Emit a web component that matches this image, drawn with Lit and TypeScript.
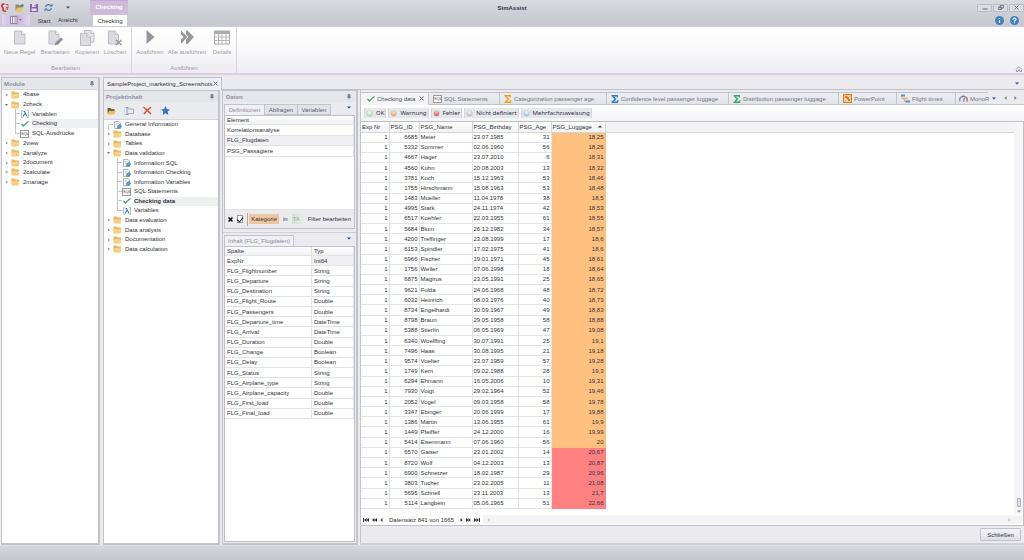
import { LitElement, html, svg, css, nothing } from "lit";
import { customElement, property } from "lit/decorators.js";
import { classMap } from "lit/directives/class-map.js";

const svgIcon = (w: number, h: number, vb: string, body: unknown) =>
  html`<svg width=${w} height=${h} viewBox=${vb} aria-hidden="true">${body}</svg>`;

const icons: Record<string, () => unknown> = {
  logo: () => svgIcon(8, 9, "0 0 16 18", svg`<path d="M7 2C3 1 1 4 2 7s3 2 2 5 2 5 6 4" fill="none" stroke="#d8232e" stroke-width="3"/><path d="M9 3h5v4M10 9h5M13 9v5M9 12h2" stroke="#e0525a" stroke-width="2" fill="none"/>`),
  openProject: () => svgIcon(9, 9, "0 0 18 18", svg`<path d="M1 3h6l2 2h5v10H1z" fill="#8b8878"/><path d="M4 9h13l-3 8H1z" fill="#f3c05c"/><path d="M9 6q2-4 5-3V1l4 4-4 4V6q-2-1-5 0z" fill="#4a7fb8"/>`),
  save: () => svgIcon(8, 8, "0 0 16 16", svg`<path d="M0 0h16v16H0z" fill="#8a5fb0"/><path d="M4 0h8v6H4z" fill="#e8daf0"/><path d="M3 9h10v5H3z" fill="#e6dcef"/><path d="M9 1h2v4H9z" fill="#8a55ad"/>`),
  refresh: () => svgIcon(9, 9, "0 0 18 18", svg`<path d="M3 8a6 6 0 0 1 11-2M15 10a6 6 0 0 1-11 2" fill="none" stroke="#3a7dbd" stroke-width="2.4"/><path d="M11 7h6V1zM7 11H1v6z" fill="#3a7dbd"/>`),
  down: () => svgIcon(4, 3, "0 0 8 6", svg`<path d="M0 1h8L4 5z" fill="currentColor"/>`),
  up: () => svgIcon(4, 3, "0 0 8 6", svg`<path d="M0 5h8L4 1z" fill="currentColor"/>`),
  left: () => svgIcon(3, 4, "0 0 6 8", svg`<path d="M5 0v8L1 4z" fill="currentColor"/>`),
  right: () => svgIcon(3, 4, "0 0 6 8", svg`<path d="M1 0v8l4-4z" fill="currentColor"/>`),
  first: () => svgIcon(6, 4, "0 0 12 8", svg`<path d="M0 0h2v8H0zM7 0v8L2 4zM12 0v8L7 4z" fill="currentColor"/>`),
  prevPage: () => svgIcon(5, 4, "0 0 10 8", svg`<path d="M5 0v8L0 4zM10 0v8L5 4z" fill="currentColor"/>`),
  nextPage: () => svgIcon(5, 4, "0 0 10 8", svg`<path d="M0 0v8l5-4zM5 0v8l5-4z" fill="currentColor"/>`),
  last: () => svgIcon(6, 4, "0 0 12 8", svg`<path d="M10 0h2v8h-2zM0 0v8l5-4zM5 0v8l5-4z" fill="currentColor"/>`),
  minimize: () => svgIcon(6, 5, "0 0 12 10", svg`<path d="M1 8h10" stroke="#666874" stroke-width="2"/>`),
  restore: () => svgIcon(6, 5, "0 0 12 10", svg`<path d="M4 1h7v5H4zM1 4h6v5H1z" fill="#d5d6dc" stroke="#666874" stroke-width="1.6"/>`),
  close: () => svgIcon(5, 5, "0 0 10 10", svg`<path d="M1 1l8 8M9 1L1 9" stroke="currentColor" stroke-width="1.8"/>`),
  clear: () => svgIcon(5, 5, "0 0 10 10", svg`<path d="M1 1l8 8M9 1L1 9" stroke="#111" stroke-width="3"/>`),
  info: () => svgIcon(9, 9, "0 0 18 18", svg`<circle cx="9" cy="9" r="9" fill="#4183be"/><path d="M9 8v6M9 4v2" stroke="#fff" stroke-width="2.4"/>`),
  help: () => svgIcon(9, 9, "0 0 18 18", svg`<circle cx="9" cy="9" r="9" fill="#4183be"/><path d="M6 7q0-3 3-3t3 2.500q0 1.500-3 3.500v1M9 12.500v2" fill="none" stroke="#fff" stroke-width="2.200"/>`),
  appMenu: () => svgIcon(12, 8, "0 0 24 16", svg`<path d="M1 1h13v14H1z" fill="#f0eaf6"/><path d="M1 1h13v14H1zM5 1v14M8 4h4M8 8h4M8 12h4" fill="none" stroke="#77707f" stroke-width="1.500"/><path d="M18 6h6l-3 4z" fill="#8d7f9b"/>`),
  page: () => svgIcon(16, 16, "0 0 32 32", svg`<path d="M5 2h14l7 7v19H5z" fill="#dcdce0" stroke="#bcbdc3" stroke-width="2"/><path d="M19 2v7h7" fill="#f0f0f3" stroke="#bcbdc3" stroke-width="2"/>`),
  edit: () => svgIcon(16, 16, "0 0 32 32", svg`<path d="M4 2h13l7 7v19H4z" fill="#dcdce0" stroke="#bcbdc3" stroke-width="2"/><path d="M17 2v7h7" fill="#f0f0f3" stroke="#bcbdc3" stroke-width="2"/><path d="M15 31l2-6L28 15l4 4-11 10z" fill="#8f9096"/>`),
  copy: () => svgIcon(16, 16, "0 0 32 32", svg`<path d="M11 1h13l6 6v17H11z" fill="#e5e5e9" stroke="#bcbdc3" stroke-width="2"/><path d="M3 7h13l7 7v17H3z" fill="#dcdce0" stroke="#bcbdc3" stroke-width="2"/><path d="M16 7v7h7M24 1v6h6" fill="#f0f0f3" stroke="#bcbdc3" stroke-width="2"/>`),
  remove: () => svgIcon(16, 16, "0 0 32 32", svg`<path d="M3 2h13l7 7v19H3z" fill="#dcdce0" stroke="#bcbdc3" stroke-width="2"/><path d="M16 2v7h7" fill="#f0f0f3" stroke="#bcbdc3" stroke-width="2"/><path d="M18 20l11 10M29 20L18 30" stroke="#96979d" stroke-width="3"/>`),
  run: () => svgIcon(16, 16, "0 0 32 32", svg`<path d="M9 0v28l16-14z" fill="#95969b"/>`),
  runAll: () => svgIcon(16, 16, "0 0 32 32", svg`<path d="M4 1l13 13L4 28V19l5-5-5-5zM14 1h3l13 13-13 14h-3v-9l5-5-5-5z" fill="#97989d"/>`),
  details: () => svgIcon(16, 16, "0 0 32 32", svg`<path d="M1 2h30v26H1z" fill="#fff" stroke="#a9aab0" stroke-width="2"/><path d="M1 2h30v6H1z" fill="#aaabb1"/><path d="M1 14h30M1 21h30M9 8v20M16 8v20M24 8v20" stroke="#b5b6bc" stroke-width="2"/>`),
  collapse: () => svgIcon(8, 6, "0 0 16 12", svg`<path d="M2 7l6-6 6 6M3 8v3h3l2-4 2 4h3V8" fill="none" stroke="#74757d" stroke-width="1.400"/>`),
  pin: () => svgIcon(4, 6, "0 0 8 12", svg`<path d="M2 1h4v5H2zM0 7h8M4 7v4" fill="#8d8f9b" stroke="#72747f" stroke-width="1.400"/>`),
  folder: () => svgIcon(9, 8, "0 0 18 16", svg`<path d="M1 1h6l2 2h7v5H1z" fill="#e9b75f"/><path d="M1 13V6h3l1 1h12l-2 8H2z" fill="#f6cc80"/><path d="M4 8h13" stroke="#fff0cf" stroke-width="1"/>`),
  folderOpen: () => svgIcon(9, 8, "0 0 18 16", svg`<path d="M1 2h6l2 2h6v4H5l-4 6z" fill="#6f6543"/><path d="M5 8h13l-4 7H1z" fill="#f0bd5a"/>`),
  variable: () => svgIcon(8, 8, "0 0 16 16", svg`<path d="M4 1H1v14h3M12 1h3v14h-3" fill="none" stroke="#a9b0bb" stroke-width="1.600"/><path d="M5 3h2l5 10M8 7l-4 6" fill="none" stroke="#2d75c9" stroke-width="2.200"/>`),
  check: () => svgIcon(8, 8, "0 0 16 16", svg`<path d="M1 8l4 4Q8 8 15 3" fill="none" stroke="#4a9c78" stroke-width="2.600"/>`),
  sql: () => html`<span class="sql">SQL</span>`,
  doc: () => svgIcon(8, 8, "0 0 16 16", svg`<path d="M1 1h9l3 3v11H1z" fill="#fff" stroke="#8f949e" stroke-width="1.400"/><path d="M3 5h6M3 8h4" stroke="#a9aeb8" stroke-width="1.200"/><path d="M6 15l1-6 5-3 4 4-3 5z" fill="#4a86c8"/><path d="M9 13l4-5" stroke="#cfe0f2" stroke-width="1"/>`),
  rename: () => svgIcon(9, 8, "0 0 18 16", svg`<path d="M5 4h12v9H5" fill="none" stroke="#8a8f9a" stroke-width="1.400"/><path d="M1 1h6M1 15h6M4 1v14" stroke="#5d92cb" stroke-width="1.600"/>`),
  cross: () => svgIcon(9, 9, "0 0 18 18", svg`<path d="M1 2q6 5 15 14M16 2Q8 8 2 16" fill="none" stroke="#e0492f" stroke-width="3"/>`),
  star: () => svgIcon(9, 9, "0 0 18 18", svg`<path d="M9 0l2.800 6 6.200.800-4.600 4.400L14.600 18 9 14.500 3.400 18l1.200-6.800L0 6.800 6.200 6z" fill="#3478bd"/>`),
  sumOrange: () => sigma("#f0a020"),
  sumBlue: () => sigma("#2b80bd"),
  sumGreen: () => sigma("#2fae66"),
  powerpoint: () => svgIcon(9, 9, "0 0 18 18", svg`<path d="M0 0h18v18H0z" fill="#dd7d22"/><path d="M3 3h12v12H3z" fill="none" stroke="#fbe3c6" stroke-width="1.500"/><path d="M6 8a3 3 0 1 0 4 4H6zM9 5h4v5" fill="none" stroke="#fff" stroke-width="1.500"/>`),
  gantt: () => svgIcon(9, 9, "0 0 18 18", svg`<path d="M0 1h8v4H0z" fill="#5d92c5"/><path d="M4 7h9v4H4z" fill="#f0b948"/><path d="M9 13h9v4H9z" fill="#5d92c5"/><path d="M2 5v4h2M7 11v4h2" stroke="#8a8f99" stroke-width="1" fill="none"/>`),
  gauge: () => svgIcon(9, 7, "0 0 18 14", svg`<path d="M2 13a7 7 0 0 1 3-9" fill="none" stroke="#8b95a5" stroke-width="3"/><path d="M5 4a7 7 0 0 1 8 0" fill="none" stroke="#707a89" stroke-width="3"/><path d="M13 4a7 7 0 0 1 3 9" fill="none" stroke="#c4756f" stroke-width="3"/><path d="M9 13l2-7" stroke="#5b8cc0" stroke-width="2.500"/>`),
};

function sigma(color: string) {
  return svgIcon(8, 8, "0 0 16 16", svg`<path d="M1 0h13v5h-2q0-2-2-2H6l5 5-5 5h4q2 0 3-3h2l-1 6H1v-2l6-6-6-6z" fill=${color}/>`);
}

interface TreeNode {
  label: string;
  icon: string;
  child?: boolean;
  open?: boolean;
  leaf?: boolean;
  selected?: boolean;
  bold?: boolean;
  last?: boolean;
}

const modules: TreeNode[] = [
  { label: "4base", icon: "folder" },
  { label: "2check", icon: "folder", open: true },
  { label: "Variablen", icon: "variable", child: true },
  { label: "Checking", icon: "check", child: true, selected: true },
  { label: "SQL-Ausdrücke", icon: "sql", child: true, last: true },
  { label: "2view", icon: "folder" },
  { label: "2analyze", icon: "folder" },
  { label: "2document", icon: "folder" },
  { label: "2calculate", icon: "folder" },
  { label: "2manage", icon: "folder" },
];

const project: TreeNode[] = [
  { label: "General Information", icon: "doc", leaf: true },
  { label: "Database", icon: "folder" },
  { label: "Tables", icon: "folder" },
  { label: "Data validation", icon: "folder", open: true },
  { label: "Information SQL", icon: "doc", child: true },
  { label: "Information Checking", icon: "doc", child: true },
  { label: "Information Variables", icon: "doc", child: true },
  { label: "SQL Statements", icon: "sql", child: true },
  { label: "Checking data", icon: "check", child: true, selected: true, bold: true },
  { label: "Variables", icon: "variable", child: true, last: true },
  { label: "Data evaluation", icon: "folder" },
  { label: "Data analysis", icon: "folder" },
  { label: "Documentation", icon: "folder" },
  { label: "Data calculation", icon: "folder" },
];

const columns: [string, string][] = [
  ["ExpNr", "Int64"], ["FLG_Flightnumber", "String"], ["FLG_Departure", "String"],
  ["FLG_Destination", "String"], ["FLG_Flight_Route", "Double"], ["FLG_Passengers", "Double"],
  ["FLG_Departure_time", "DateTime"], ["FLG_Arrival", "DateTime"], ["FLG_Duration", "Double"],
  ["FLG_Change", "Boolean"], ["FLG_Delay", "Boolean"], ["FLG_Status", "String"],
  ["FLG_Airplane_type", "String"], ["FLG_Airplane_capacity", "Double"],
  ["FLG_First_load", "Double"], ["FLG_Final_load", "Double"],
];

const passengers = `6685 Meier 23.07.1985 31 18,25
5332 Sommer 02.06.1960 56 18,26
4667 Hager 23.07.2010 6 18,31
4560 Kuhn 20.08.2003 13 18,32
3781 Koch 15.12.1963 53 18,46
1755 Hirschmann 15.08.1963 53 18,48
1483 Mueller 11.04.1978 38 18,5
4995 Stark 24.11.1974 42 18,53
6517 Koehler 22.03.1955 61 18,55
5684 Blum 26.12.1982 34 18,57
4200 Treffinger 23.08.1999 17 18,6
6153 Spindler 17.02.1975 41 18,6
6966 Fischer 19.01.1971 45 18,61
1756 Weller 07.06.1998 18 18,64
6875 Magirus 23.05.1991 25 18,65
9621 Fulda 24.06.1968 48 18,72
6032 Heinrich 08.03.1976 40 18,73
8734 Engelhardt 30.09.1967 49 18,83
8798 Braun 29.05.1958 58 18,88
5388 Stierlin 06.05.1969 47 19,08
6340 Woelffing 30.07.1991 25 19,1
7496 Haas 30.08.1995 21 19,18
9574 Voelter 23.07.1959 57 19,28
1749 Kern 09.02.1988 28 19,3
6294 Ehmann 16.05.2006 10 19,31
7930 Voigt 29.02.1964 52 19,46
2052 Vogel 09.03.1958 58 19,78
3347 Ebinger 20.06.1999 17 19,88
1386 Martin 13.06.1955 61 19,9
1449 Pfeiffer 24.12.2000 16 19,99
5414 Eisenmann 07.06.1960 56 20
6570 Gaiser 23.01.2002 14 20,67
8720 Wolf 04.12.2003 13 20,87
6900 Schnetzer 18.02.1987 29 20,96
3803 Tucher 23.02.2005 11 21,08
5695 Schnell 23.11.2003 13 21,7
5114 Langbein 05.06.1965 51 22,66`.split("\n").map((line) => line.split(" "));

const shared = css`
  * { box-sizing: border-box; }
  button {
    font: inherit;
    color: inherit;
    background: none;
    border: 0;
    padding: 0;
    margin: 0;
    white-space: nowrap;
  }
  svg { display: block; flex: none; }
  .sql {
    flex: none;
    width: 9px;
    height: 8px;
    border: 1px solid #9c9c9c;
    background: #fff;
    color: #333;
    font-size: 4px;
    line-height: 6px;
    text-align: center;
  }
`;

@customElement("tree-view")
export class TreeView extends LitElement {
  @property({ attribute: false }) nodes: TreeNode[] = [];

  static styles = [shared, css`
    :host { display: block; }
    .tree { margin: 0; padding: 0; list-style: none; display: grid; grid-auto-rows: 1fr; height: 100%; }
    .node { display: flex; align-items: center; white-space: nowrap; min-height: 0; line-height: 9px; }
    .rail { width: 9px; align-self: stretch; display: grid; place-items: center; color: #777; flex: none; }
    .twig { width: 9px; align-self: stretch; flex: none; display: grid; grid-template: 1fr 1fr / 5px 4px; }
    .twig i:nth-child(1), .twig i:nth-child(3) { border-right: 1px solid #c4c5ca; }
    .twig i:nth-child(2) { border-bottom: 1px solid #c4c5ca; }
    .last .twig i:nth-child(3), .leaf .twig i:nth-child(1) { border-color: transparent; }
    .body { flex: 1; align-self: stretch; display: flex; align-items: center; gap: 3px; }
    .icon { width: 9px; display: grid; place-items: center; }
    .selected .label { flex: 1; background: #eeeff1; }
    .bold { font-weight: bold; }
  `];

  render() {
    return html`<ul class="tree" role="tree">
      ${this.nodes.map((n) => html`
        <li role="treeitem" class=${classMap({ node: true, selected: !!n.selected, bold: !!n.bold, last: !!n.last, leaf: !!n.leaf })}>
          ${n.leaf ? nothing : html`<span class="rail">${n.child ? nothing : n.open ? svgIcon(3, 2, "0 0 6 4", svg`<path d="M0 0h6L3 4z" fill="#777"/>`) : svgIcon(2, 4, "0 0 4 8", svg`<path d="M0 1v6l4-3z" fill="#999"/>`)}</span>`}
          ${n.child || n.leaf ? html`<span class="twig"><i></i><i></i><i></i></span>` : nothing}
          <span class="body"><span class="icon">${icons[n.icon]()}</span><span class="label">${n.label}</span></span>
        </li>`)}
    </ul>`;
  }
}

@customElement("app-root")
export class AppRoot extends LitElement {
  static styles = [shared, css`
    :host {
      display: flex;
      flex-direction: column;
      height: 100vh;
      overflow: hidden;
      font: 6px/10px "Liberation Sans", Arial, sans-serif;
      color: #32323e;
      background: #ebebef;
    }

    .title { display: grid; grid-template-columns: 1fr auto 1fr; height: 15px; align-items: center; background: linear-gradient(#dadbdf, #cdced5); }
    .quick { display: flex; gap: 6px; align-items: center; padding-left: 1px; height: 15px; }
    .quick .more { margin-left: 7px; color: #444; }
    .context { width: 38px; height: 15px; margin-left: 14px; border-top: 1px solid #c9a6da; background: #cdbbd9; color: #fff; font-weight: bold; line-height: 13px; text-align: center; }
    .title h1 { margin: 0; font-size: 6px; }
    .window { display: flex; justify-content: flex-end; gap: 1px; }
    .window button { width: 15px; height: 8px; border: 1px solid #bcbdc5; border-radius: 1px; display: grid; place-items: center; background: #dcdde2; color: #666874; }

    .menu { display: flex; height: 11px; align-items: stretch; background: linear-gradient(#cdced5, #c6c7cf); }
    .menu .app { width: 28px; margin: 0 0 1px 2px; display: grid; place-items: center; background: linear-gradient(90deg, #dcd6f0, #c7b0e0, #e3d8f0); }
    .menu .start { width: 28px; }
    .menu .view { width: 32px; }
    .menu .active { width: 34px; margin-left: 3px; background: #fff; }
    .menu .helpers { margin-left: auto; display: flex; gap: 6px; padding-right: 5px; align-items: center; }

    .ribbon { display: flex; height: 49px; border-top: 1px solid #d9cae2; border-bottom: 2px solid #dccde4; background: linear-gradient(#fff, #f9f9fb 50%, #ededf2); color: #9a9ba6; }
    .group { display: flex; flex-direction: column; justify-content: space-between; border-right: 1px solid #d5d6dc; }
    .tools button { display: flex; flex-direction: column; align-items: center; gap: 1px; }
    .tools { display: grid; padding: 3px 0 0 3px; }
    .edit-group { width: 132px; }
    .edit-group .tools { grid-template-columns: 33px 38px 26px 30px; }
    .run-group { width: 105px; }
    .run-group .tools { grid-template-columns: 30px 44px 26px; }
    .caption { text-align: center; line-height: 9px; background: #ededf2; }
    .ribbon .fold { margin: auto 1px 1px auto; }

    .workspace { flex: 1; min-height: 0; display: grid; grid-template-columns: 99px minmax(0, 1fr); gap: 3px; padding: 2px 0 0 1px; }
    .panel { display: flex; flex-direction: column; min-width: 0; min-height: 0; border: 1px solid #c2c3cb; border-width: 1px 2px 2px 1px; background: #ebebef; }
    .panel-head { display: flex; justify-content: space-between; align-items: center; height: 11px; flex: none; margin: 0; padding: 0 4px 0 2px; background: #e5e6ea; color: #8e909e; font-size: 6px; font-weight: bold; }
    .surface { flex: 1; background: #fff; border-top: 1px solid #d4d5db; min-height: 0; }
    .modules tree-view { height: 97px; }
    .contents tree-view { height: 134px; }

    .document { display: flex; flex-direction: column; min-width: 0; min-height: 0; }
    .doc-tabs { display: flex; height: 13px; border-bottom: 1px solid #bfc0c8; align-items: center; justify-content: space-between; padding-right: 5px; color: #1f3fa0; }
    .doc-tab { width: 119px; height: 13px; display: flex; align-items: center; justify-content: space-between; padding: 0 3px; border: 1px solid #bfc0c8; border-bottom: 0; background: #efeff3; color: #32323e; }
    .doc-tab button { color: #666; }
    .columns { flex: 1; min-height: 0; display: grid; grid-template-columns: 117px 136px minmax(0, 1fr); gap: 2px; }

    .strip { display: flex; height: 17px; flex: none; align-items: center; gap: 8px; padding-left: 3px; }
    .strip button + button { border-left: 1px solid #dddee4; }

    .data { padding: 0 1px 1px; }
    .subtabs { display: flex; height: 13px; flex: none; align-items: flex-end; color: #5e606c; }
    .subtabs button { height: 11px; border: 1px solid #c2c3cb; border-left: 0; background: #e2e3e8; }
    .subtabs .active { border-left: 1px solid #c2c3cb; border-bottom: 0; background: #f0f0f4; color: #8a8c98; }
    .subtabs .w1 { width: 41px; }
    .subtabs .w2 { width: 33px; }
    .subtabs .w3 { width: 33px; }
    .subtabs .w4 { width: 70px; }
    .subtabs .drop { height: 3px; margin: 0 4px 6px auto; border: 0; background: none; color: #1f3fa0; }
    .box { border: 1px solid #bfc0c8; background: #fff; display: flex; flex-direction: column; }
    .definitions { height: 114px; }
    table { border-collapse: collapse; table-layout: fixed; font: inherit; }
    th { font-weight: normal; text-align: left; background: linear-gradient(#fdfdfe, #f2f2f5); }
    th, td { padding: 0 1px; line-height: 8px; white-space: nowrap; border: 1px solid #e2e3e9; border-width: 0 1px 1px 0; }
    .elements th, .elements td, .fields th, .fields td { padding: 0 2px; }
    .elements, .fields { width: 100%; }
    .elements { height: 41px; }
    .fields { height: 172px; }
    .fields .type { width: 42px; }
    .focus { background: #f0f0f3; }
    .filter { margin-top: auto; height: 19px; display: flex; align-items: center; gap: 4px; padding: 0 3px; border-top: 1px solid #e2e3e9; background: #ebebef; }
    .filter input { appearance: none; width: 8px; height: 8px; margin: 0; border: 1px solid #999; background: #fff; display: grid; place-items: center; }
    .filter input:checked::after { content: ""; width: 3px; height: 5px; border: solid #222; border-width: 0 1px 1px 0; transform: rotate(40deg); }
    .filter .cond { display: flex; gap: 4px; align-items: center; border-left: 1px solid #aaa; padding-left: 1px; height: 13px; }
    .tag { padding: 0 2px; background: #edc89f; }
    .value { width: 12px; padding-left: 1px; color: #a8aaa8; background: linear-gradient(90deg, #cfe0d0, #ebebef); }
    .filter .edit { margin-left: auto; }
    .gap { height: 4px; flex: none; margin: 0 -1px; border-bottom: 1px solid #d0d1d8; }
    .fieldbox { flex: 1; min-height: 0; }

    .result { display: flex; flex-direction: column; min-width: 0; min-height: 0; border-left: 1px solid #c2c3cb; border-bottom: 2px solid #cfd0d6; padding-top: 2px; }
    .tabs { display: grid; grid-template-columns: 68px 71px 107px 122px 110px 58px 59px minmax(0, 1fr) 36px; height: 13px; flex: none; color: #747682; }
    .tabs .tab { display: flex; align-items: center; gap: 2px; padding: 0 4px; white-space: nowrap; border: 1px solid #c2c3cb; border-left: 0; background: linear-gradient(#ededf1, #e2e3e8); }
    .tabs .tab:nth-last-child(2) { padding: 0 0 0 3px; border-right: 0; }
    .tabs .active { background: #f4f4f7; border-bottom-color: #f4f4f7; color: #4a4c58; padding-left: 6px; }
    .tabs .active .x { margin-left: auto; }
    .tabs .nav { display: flex; align-items: center; justify-content: space-between; padding: 0 7px 0 4px; border-bottom: 1px solid #c2c3cb; }
    .nav button:first-child { color: #1f3fa0; }
    .legend { display: flex; gap: 2px; align-items: center; height: 16px; flex: none; padding-left: 3px; background: linear-gradient(#fff, #f4f4f7); font-family: "Noto Sans", sans-serif; }
    .legend button { height: 10px; display: flex; gap: 3px; align-items: center; padding: 0 1px; border: 1px solid #d5d6dc; border-width: 0 1px; background: #e6e7ec; }
    .dot { width: 7px; height: 7px; border-radius: 50%; border: 1px solid #d0d1d6; }
    .ok { background: radial-gradient(circle at 50% 20%, #fff, #84dc88); }
    .warn { background: radial-gradient(circle at 50% 20%, #ffe9c9, #f28a25); }
    .error { background: radial-gradient(circle at 50% 20%, #ffc9c4, #dc2a24); }
    .none { background: radial-gradient(circle at 50% 20%, #fff, #a9abb0); }
    .multi { background: radial-gradient(circle at 50% 20%, #fff, #62bce2); }
    .grid { flex: 1; min-height: 0; display: grid; grid-template-columns: minmax(0, 1fr) 9px; grid-template-rows: minmax(0, 1fr) auto; border: solid #bfc0c8; border-width: 1px 1px 1px 0; background: #fff; }
    .view { display: flex; min-width: 0; min-height: 0; overflow: hidden; align-items: flex-start; }
    .rows { width: 244px; height: 387px; flex: none; }
    .rows th { height: 10px; border-color: #d5d6dc; }
    .rest { flex: 1; height: 11px; background: #f4f4f7; border-bottom: 1px solid #d5d6dc; }
    .rows .num { text-align: right; padding: 0 1px 0 0; }
    .c1 { width: 28px; } .c2 { width: 30px; } .c3 { width: 53px; } .c4 { width: 46px; } .c5 { width: 33px; } .c6 { width: 54px; }
    td.amber { background: #ffc080; border-color: #ffc080; }
    td.red { background: #ff8080; border-color: #ff8080; }
    .sorted { display: flex; justify-content: space-between; align-items: center; padding-right: 2px; }
    .vscroll { display: flex; flex-direction: column; align-items: center; justify-content: flex-end; gap: 3px; padding-bottom: 1px; background: #f5f5f7; color: #85868f; }
    .thumb { width: 4px; height: 9px; border: 1px solid #aeafb7; border-radius: 1px; background: #dddee3; }
    .pager { grid-column: 1 / -1; height: 11px; display: flex; align-items: center; gap: 3px; padding-left: 2px; background: #fff; }
    .pager .count { padding: 0 3px; }
    .hscroll { flex: 1; height: 9px; display: flex; justify-content: space-between; align-items: center; padding: 0 12px 0 4px; background: #f4f4f6; color: #c3c4ca; }
    .actions { height: 17px; flex: none; display: flex; justify-content: flex-end; align-items: center; padding-right: 3px; }
    .actions button { width: 41px; height: 13px; border: 1px solid #c0c1ca; border-radius: 1px; background: linear-gradient(#f3f3f6, #dfe0e6); }
    .status { height: 15px; flex: none; border-top: 1px solid #dfe0e4; background: linear-gradient(#d6d7db, #c6c7cd); }
  `];

  private tool(icon: string, label: string) {
    return html`<button>${icons[icon]()}<span>${label}</span></button>`;
  }

  private iconButton(icon: string, label: string, cls = "") {
    return html`<button class=${cls} aria-label=${label}>${icons[icon]()}</button>`;
  }

  private tab(icon: string, label: string) {
    return html`<button class="tab" role="tab">${icons[icon]()}<span>${label}</span></button>`;
  }

  private legend(kind: string, label: string) {
    return html`<button><span class="dot ${kind}"></span>${label}</button>`;
  }

  render() {
    return html`
      <header class="title">
        <div class="quick">
          ${this.iconButton("logo", "SimAssist")}${this.iconButton("openProject", "Öffnen")}
          ${this.iconButton("save", "Speichern")}${this.iconButton("refresh", "Aktualisieren")}
          ${this.iconButton("down", "Mehr", "more")}
          <span class="context">Checking</span>
        </div>
        <h1>SimAssist</h1>
        <div class="window">
          ${this.iconButton("minimize", "Minimieren")}${this.iconButton("restore", "Wiederherstellen")}${this.iconButton("close", "Fenster schließen")}
        </div>
      </header>
      <nav class="menu">
        ${this.iconButton("appMenu", "Menü", "app")}
        <button class="start">Start</button><button class="view">Ansicht</button><button class="active">Checking</button>
        <span class="helpers">${this.iconButton("info", "Info")}${this.iconButton("help", "Hilfe")}</span>
      </nav>
      <section class="ribbon">
        <div class="group edit-group">
          <div class="tools">${this.tool("page", "Neue Regel")}${this.tool("edit", "Bearbeiten")}${this.tool("copy", "Kopieren")}${this.tool("remove", "Löschen")}</div>
          <div class="caption">Bearbeiten</div>
        </div>
        <div class="group run-group">
          <div class="tools">${this.tool("run", "Ausführen")}${this.tool("runAll", "Alle ausführen")}${this.tool("details", "Details")}</div>
          <div class="caption">Ausführen</div>
        </div>
        ${this.iconButton("collapse", "Menüband einklappen", "fold")}
      </section>
      <main class="workspace">
        <section class="panel modules">
          <h2 class="panel-head">Module ${icons.pin()}</h2>
          <div class="surface"><tree-view .nodes=${modules}></tree-view></div>
        </section>
        <section class="document">
          <div class="doc-tabs">
            <div class="doc-tab"><span>SampleProject_marketing_Screenshots</span>${this.iconButton("close", "Schließen")}</div>
            ${this.iconButton("down", "Dokumente")}
          </div>
          <div class="columns">
            <section class="panel contents">
              <h2 class="panel-head">Projektinhalt ${icons.pin()}</h2>
              <div class="strip">
                ${this.iconButton("folderOpen", "Öffnen")}${this.iconButton("rename", "Umbenennen")}
                ${this.iconButton("cross", "Löschen")}${this.iconButton("star", "Favorit")}
              </div>
              <div class="surface"><tree-view .nodes=${project}></tree-view></div>
            </section>
            ${this.renderData()} ${this.renderResult()}
          </div>
        </section>
      </main>
      <footer class="status"></footer>
    `;
  }

  private renderData() {
    return html`<section class="panel data">
      <h2 class="panel-head">Daten ${icons.pin()}</h2>
      <div class="subtabs">
        <button class="active w1">Definitionen</button><button class="w2">Abfragen</button><button class="w3">Variablen</button>
        ${this.iconButton("down", "Weitere", "drop")}
      </div>
      <div class="box definitions">
        <table class="elements">
          <thead><tr><th>Element</th></tr></thead>
          <tbody>
            <tr><td>Korrelationsanalyse</td></tr>
            <tr class="focus"><td>FLG_Flugdaten</td></tr>
            <tr><td>PSG_Passagiere</td></tr>
          </tbody>
        </table>
        <div class="filter">
          ${this.iconButton("clear", "Filter entfernen")}
          <input type="checkbox" checked aria-label="Filter aktiv" />
          <span class="cond"><span class="tag">Kategorie</span>in<span class="value">TA</span></span>
          <button class="edit">Filter bearbeiten</button>
        </div>
      </div>
      <div class="gap"></div>
      <div class="subtabs">
        <button class="active w4">Inhalt (FLG_Flugdaten)</button>
        ${this.iconButton("down", "Weitere", "drop")}
      </div>
      <div class="box fieldbox">
        <table class="fields">
          <thead><tr><th>Spalte</th><th class="type">Typ</th></tr></thead>
          <tbody>${columns.map(([name, type], i) => html`<tr><td>${name}</td><td class=${i === 0 ? "focus" : ""}>${type}</td></tr>`)}</tbody>
        </table>
      </div>
    </section>`;
  }

  private renderResult() {
    return html`<section class="result">
      <div class="tabs" role="tablist">
        <div class="tab active">${icons.check()}<span>Checking data</span>${this.iconButton("close", "Tab schließen", "x")}</div>
        ${this.tab("sql", "SQL Statements")}${this.tab("sumOrange", "Categorization passenger age")}
        ${this.tab("sumBlue", "Confidence level passenger luggage")}${this.tab("sumGreen", "Distribution passenger luggage")}
        ${this.tab("powerpoint", "PowerPoint")}${this.tab("gantt", "Flight times")}${this.tab("gauge", "MonoR")}
        <div class="nav">${this.iconButton("down", "Alle Tabs")}${this.iconButton("left", "Zurück")}${this.iconButton("right", "Weiter")}</div>
      </div>
      <div class="legend">
        ${this.legend("ok", "OK")}${this.legend("warn", "Warnung")}${this.legend("error", "Fehler")}
        ${this.legend("none", "Nicht definiert")}${this.legend("multi", "Mehrfachzuweisung")}
      </div>
      <div class="grid">
        <div class="view">
          <table class="rows">
            <thead><tr>
              <th class="c1">Exp Nr</th><th class="c2">PSG_ID</th><th class="c3">PSG_Name</th>
              <th class="c4">PSG_Birthday</th><th class="c5">PSG_Age</th>
              <th class="c6"><span class="sorted">PSG_Luggage ${icons.up()}</span></th>
            </tr></thead>
            <tbody>${passengers.map(([id, name, born, age, luggage], i) => html`<tr>
              <td class="num">1</td><td class="num">${id}</td><td>${name}</td><td>${born}</td>
              <td class="num">${age}</td><td class="num ${i < 31 ? "amber" : "red"}">${luggage}</td>
            </tr>`)}</tbody>
          </table>
          <div class="rest"></div>
        </div>
        <div class="vscroll"><span class="thumb"></span>${icons.down()}</div>
        <div class="pager">
          ${this.iconButton("first", "Erster")}${this.iconButton("prevPage", "Vorige Seite")}${this.iconButton("left", "Voriger")}
          <span class="count">Datensatz 841 von 1665</span>
          ${this.iconButton("right", "Nächster")}${this.iconButton("nextPage", "Nächste Seite")}${this.iconButton("last", "Letzter")}
          <div class="hscroll">${icons.left()}${icons.right()}</div>
        </div>
      </div>
      <div class="actions"><button>Schließen</button></div>
    </section>`;
  }
}
